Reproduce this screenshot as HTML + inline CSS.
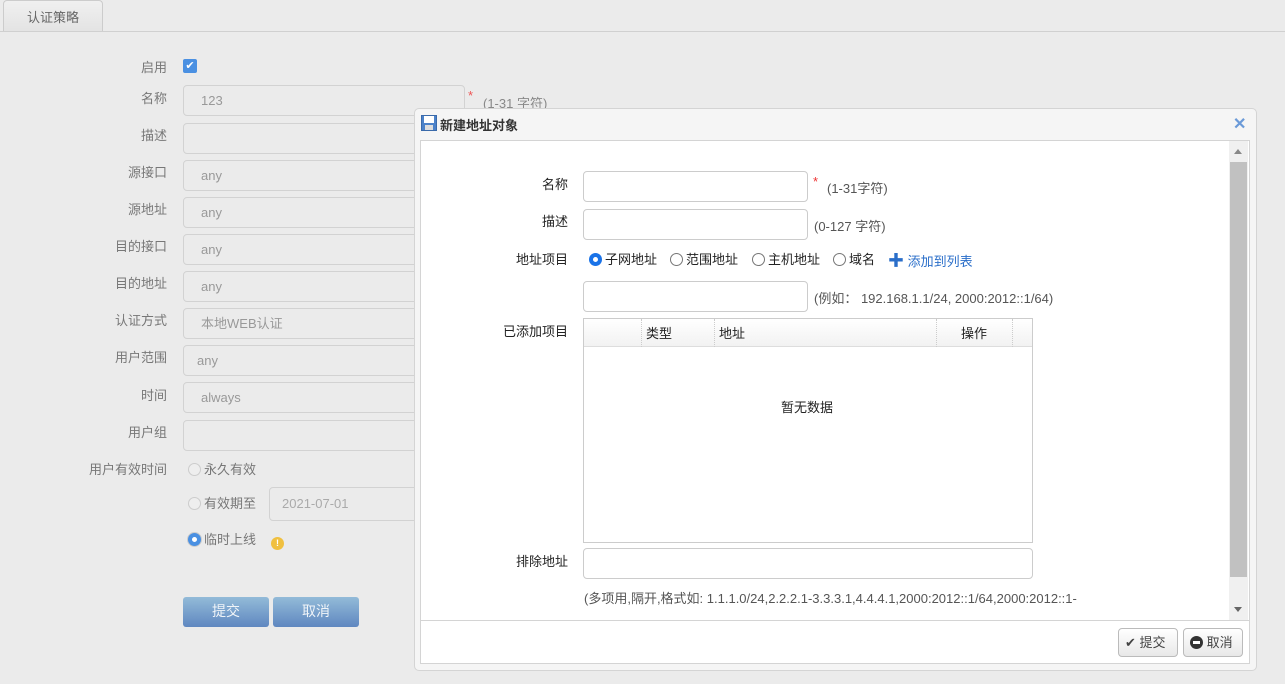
<!DOCTYPE html>
<html><head><meta charset="utf-8"><style>
*{box-sizing:border-box;margin:0;padding:0}
body{width:1285px;height:684px;background:#ebebeb;font-family:"Liberation Sans","Noto Sans CJK SC",sans-serif;font-size:13px;position:relative;overflow:hidden;color:#333}
.a{position:absolute}
.tab{left:3px;top:0;width:100px;height:32px;border:1px solid #ccc;border-bottom:none;border-radius:4px 4px 0 0;background:linear-gradient(#f0f0f0,#e3e3e3);text-align:center;line-height:34px;color:#666}
.tline{left:0;top:31px;width:1285px;height:1px;background:#d0d0d0}
.lb{color:#777;text-align:right;width:120px;left:47px}
.in{left:183px;width:282px;height:31px;border:1px solid #d2d2d2;border-radius:4px;background:#ebebeb;color:#999;padding-left:17px;line-height:29px}
.dlg{left:414px;top:108px;width:843px;height:563px;background:#f5f5f5;border:1px solid #d4d4d4;border-radius:5px}
.body{left:420px;top:140px;width:830px;height:524px;background:#fff;border:1px solid #d4d4d4}
.dl{color:#222;text-align:right;width:120px;left:448px}
.di{left:583px;width:225px;height:31px;border:1px solid #ccc;border-radius:4px;background:#fff}
.hint{color:#555}
.rad{display:inline-block;width:13px;height:13px;border:1px solid #777;border-radius:50%;vertical-align:-2px;margin-right:3px;background:#fff}
.btn{height:29px;border:1px solid #bbb;border-radius:4px;background:linear-gradient(#fff,#e8e8e8);color:#444;line-height:27px;font-size:13px}
.pb{height:30px;width:86px;border-radius:3px;background:linear-gradient(#93bbd8,#5f87c0);color:#f0f4f8;text-align:center;line-height:28px;font-size:14px}
</style></head><body>
<div class="a tab">认证策略</div>
<div class="a tline"></div>

<div class="a lb" style="top:57px">启用</div>
<div class="a" style="left:183px;top:59px;width:14px;height:14px;background:#4a90e2;border-radius:2px;color:#fff;font-size:11px;line-height:14px;text-align:center">✔</div>
<div class="a lb" style="top:88px">名称</div>
<div class="a in" style="top:85px">123</div>
<div class="a" style="left:468px;top:88px;color:#e55">*</div>
<div class="a" style="left:483px;top:93px;color:#888">(1-31 字符)</div>
<div class="a lb" style="top:125px">描述</div><div class="a in" style="top:123px"></div>
<div class="a lb" style="top:162px">源接口</div><div class="a in" style="top:160px">any</div>
<div class="a lb" style="top:199px">源地址</div><div class="a in" style="top:197px">any</div>
<div class="a lb" style="top:236px">目的接口</div><div class="a in" style="top:234px">any</div>
<div class="a lb" style="top:273px">目的地址</div><div class="a in" style="top:271px">any</div>
<div class="a lb" style="top:310px">认证方式</div><div class="a in" style="top:308px">本地WEB认证</div>
<div class="a lb" style="top:347px">用户范围</div><div class="a in" style="top:345px;padding-left:13px">any</div>
<div class="a lb" style="top:385px">时间</div><div class="a in" style="top:382px;padding-left:17px">always</div>
<div class="a lb" style="top:422px">用户组</div><div class="a in" style="top:420px"></div>
<div class="a lb" style="top:459px">用户有效时间</div>
<div class="a" style="left:188px;top:459px;color:#777"><span class="rad" style="border-color:#ccc;background:#eee"></span>永久有效</div>
<div class="a" style="left:188px;top:493px;color:#777"><span class="rad" style="border-color:#ccc;background:#eee"></span>有效期至</div>
<div class="a in" style="top:487px;left:269px;width:160px;height:34px;line-height:32px;padding-left:12px;color:#aaa">2021-07-01</div>
<div class="a" style="left:188px;top:529px;color:#777"><span class="rad" style="border:4px solid #4a90e2;box-shadow:0 0 0 1px #ccc"></span>临时上线</div>
<div class="a" style="left:271px;top:537px;width:13px;height:13px;border-radius:50%;background:#f0c040;color:#fff;font-size:9px;text-align:center;line-height:13px;font-weight:bold">!</div>
<div class="a pb" style="left:183px;top:597px">提交</div>
<div class="a pb" style="left:273px;top:597px">取消</div>

<div class="a dlg"></div>
<svg class="a" style="left:421px;top:115px" width="16" height="16" viewBox="0 0 16 16"><rect x="0.5" y="0.5" width="15" height="15" fill="#4c82c9" stroke="#3a6aaa"/><rect x="3" y="1" width="10" height="7" fill="#fff"/><rect x="4" y="10" width="8" height="5" fill="#ddd"/></svg>
<div class="a" style="left:440px;top:115px;font-weight:bold;color:#333">新建地址对象</div>
<div class="a" style="left:1233px;top:114px;color:#6b9ad8;font-size:16px;font-weight:bold">✕</div>
<div class="a body"></div>
<div class="a" style="left:1229px;top:141px;width:19px;height:479px;background:#f0f0f0"></div>
<div class="a" style="left:1230px;top:162px;width:17px;height:415px;background:#c1c1c1"></div>
<div class="a" style="left:1234px;top:149px;width:0;height:0;border:4px solid transparent;border-bottom:5px solid #888;border-top:none"></div>
<div class="a" style="left:1234px;top:607px;width:0;height:0;border:4px solid transparent;border-top:5px solid #666;border-bottom:none"></div>
<div class="a" style="left:421px;top:620px;width:828px;height:1px;background:#d4d4d4"></div>

<div class="a dl" style="top:174px">名称</div><div class="a di" style="top:171px"></div>
<div class="a" style="left:813px;top:174px;color:#e33">*</div>
<div class="a hint" style="left:827px;top:178px">(1-31字符)</div>
<div class="a dl" style="top:211px">描述</div><div class="a di" style="top:209px"></div>
<div class="a hint" style="left:814px;top:216px">(0-127 字符)</div>
<div class="a dl" style="top:249px">地址项目</div>
<div class="a" style="left:589px;top:249px;color:#222"><span class="rad" style="border:4px solid #1a73e8;box-shadow:inset 0 0 0 1px #fff"></span>子网地址</div>
<div class="a" style="left:670px;top:249px;color:#222"><span class="rad"></span>范围地址</div>
<div class="a" style="left:752px;top:249px;color:#222"><span class="rad"></span>主机地址</div>
<div class="a" style="left:833px;top:249px;color:#222"><span class="rad"></span>域名</div>
<div class="a" style="left:888px;top:251px;color:#2a6ec9"><b style="font-size:16px;line-height:13px">✚</b> 添加到列表</div>
<div class="a di" style="top:281px"></div>
<div class="a hint" style="left:814px;top:288px">(例如： 192.168.1.1/24, 2000:2012::1/64)</div>
<div class="a dl" style="top:321px">已添加项目</div>
<div class="a" style="left:583px;top:318px;width:450px;height:225px;border:1px solid #ccc"></div>
<div class="a" style="left:584px;top:319px;width:448px;height:28px;background:linear-gradient(#fff,#f2f2f2);border-bottom:1px solid #ddd"></div>
<div class="a" style="left:641px;top:319px;height:28px;border-left:1px dotted #ccc"></div>
<div class="a" style="left:714px;top:319px;height:28px;border-left:1px dotted #ccc"></div>
<div class="a" style="left:936px;top:319px;height:28px;border-left:1px dotted #ccc"></div>
<div class="a" style="left:1012px;top:319px;height:28px;border-left:1px dotted #ccc"></div>
<div class="a" style="left:646px;top:323px;color:#222">类型</div>
<div class="a" style="left:719px;top:323px;color:#222">地址</div>
<div class="a" style="left:961px;top:323px;color:#222">操作</div>
<div class="a" style="left:781px;top:397px;color:#222">暂无数据</div>
<div class="a dl" style="top:551px">排除地址</div>
<div class="a di" style="top:548px;width:450px"></div>
<div class="a hint" style="left:584px;top:588px">(多项用,隔开,格式如: 1.1.1.0/24,2.2.2.1-3.3.3.1,4.4.4.1,2000:2012::1/64,2000:2012::1-</div>

<div class="a btn" style="left:1118px;top:628px;width:60px;padding-left:6px">✔ 提交</div>
<div class="a btn" style="left:1183px;top:628px;width:60px;padding-left:6px"><span style="display:inline-block;width:13px;height:13px;border-radius:50%;background:#333;vertical-align:-2px;position:relative"><span style="position:absolute;left:3px;top:5px;width:7px;height:3px;background:#fff"></span></span> 取消</div>
</body></html>
